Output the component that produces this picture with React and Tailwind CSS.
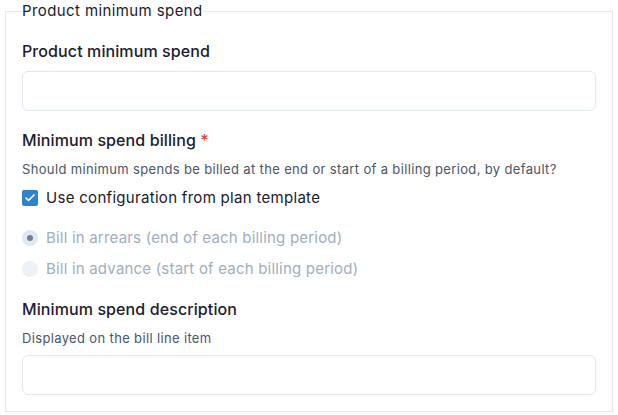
import { Check } from 'lucide-react';

// Minimum spend fieldset
export default function App() {
  return (
    <div className="w-[618px] h-[415px] bg-white px-[5px] font-['Inter',sans-serif] text-[#1a202c]">
      <fieldset className="border border-[#e2e8f0] px-4 pb-4">
        <legend className="text-[15px] leading-[22px] tracking-[0.4px] text-[#1a202c]">Product minimum spend</legend>

        {/* Product minimum spend */}
        <label className="block mt-[18px] text-[16px] leading-[22px] font-medium tracking-[0.1px]">Product minimum spend</label>
        <input type="text" className="block w-full mt-[9px] h-10 rounded-md border border-[#e2e8f0] px-3 text-[15px] outline-none" />

        {/* Billing */}
        <div className="mt-[18px] text-[16px] leading-[22px] font-medium tracking-[0.1px]">
          Minimum spend billing <span className="text-[#e53e3e]">*</span>
        </div>
        <p className="mt-2 text-[13px] leading-5 tracking-[0.35px] text-[#4a5568]">
          Should minimum spends be billed at the end or start of a billing period, by default?
        </p>
        <div className="mt-[7px] flex items-center gap-2 h-6">
          <span className="w-4 h-4 rounded-[2px] bg-[#3182ce] flex items-center justify-center">
            <Check className="w-3 h-3 text-white" strokeWidth={3.5} />
          </span>
          <span className="text-[15px] tracking-[0.3px] text-[#1a202c]">Use configuration from plan template</span>
        </div>

        <div className="mt-4 flex flex-col gap-[7px]">
          <div className="flex items-center gap-2 h-6">
            <span className="w-4 h-4 rounded-full bg-[#e2e8f0] flex items-center justify-center">
              <span className="w-[6px] h-[6px] rounded-full bg-[#718096]" />
            </span>
            <span className="text-[15px] tracking-[0.2px] text-[#a0aec0]">Bill in arrears (end of each billing period)</span>
          </div>
          <div className="flex items-center gap-2 h-6">
            <span className="w-4 h-4 rounded-full bg-[#edf2f7]" />
            <span className="text-[15px] tracking-[0.2px] text-[#a0aec0]">Bill in advance (start of each billing period)</span>
          </div>
        </div>

        {/* Description */}
        <label className="block mt-[17px] text-[16px] leading-[22px] font-medium tracking-[0.1px]">Minimum spend description</label>
        <p className="mt-2 text-[13px] leading-5 tracking-[0.35px] text-[#4a5568]">Displayed on the bill line item</p>
        <input type="text" className="block w-full mt-[7px] h-10 rounded-md border border-[#e2e8f0] px-3 text-[15px] outline-none" />
      </fieldset>
    </div>
  );
}
